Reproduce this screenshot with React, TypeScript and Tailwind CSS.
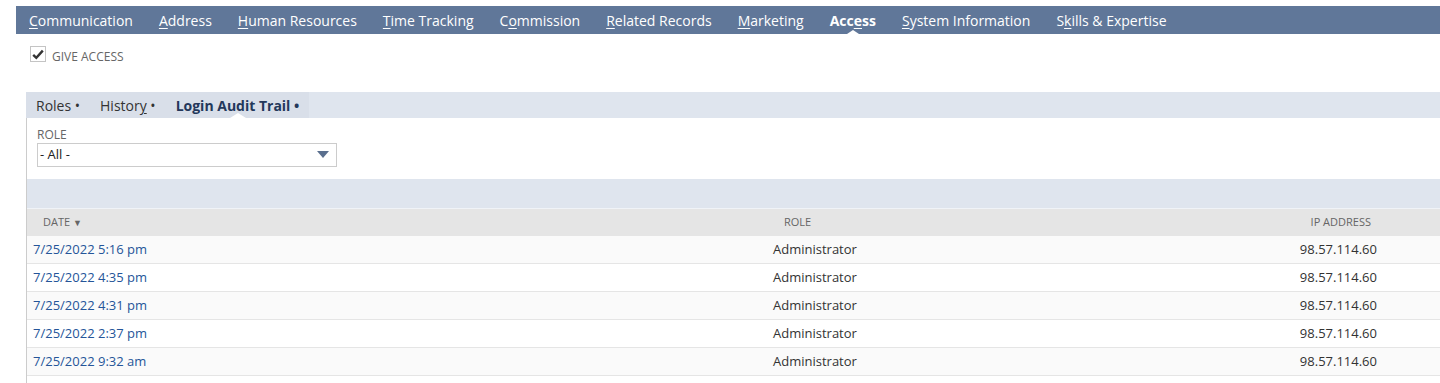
import React from "react";

const font = { fontFamily: '"Open Sans", "Noto Sans", Arial, sans-serif' };

type Tab = { pre: string; key: string; post: string; active?: boolean };
const tabs: Tab[] = [
  { pre: "", key: "C", post: "ommunication" },
  { pre: "", key: "A", post: "ddress" },
  { pre: "", key: "H", post: "uman Resources" },
  { pre: "", key: "T", post: "ime Tracking" },
  { pre: "C", key: "o", post: "mmission" },
  { pre: "", key: "R", post: "elated Records" },
  { pre: "", key: "M", post: "arketing" },
  { pre: "Acc", key: "e", post: "ss", active: true },
  { pre: "", key: "S", post: "ystem Information" },
  { pre: "S", key: "k", post: "ills & Expertise" },
];

const rows = [
  "7/25/2022 5:16 pm",
  "7/25/2022 4:35 pm",
  "7/25/2022 4:31 pm",
  "7/25/2022 2:37 pm",
  "7/25/2022 9:32 am",
];

export default function App() {
  return (
    <div className="w-[1440px] h-[383px] bg-white overflow-hidden" style={font}>
      <div className="pt-[6px] pl-4">
        <div className="h-[28px] bg-[#607799] flex items-center">
          {tabs.map((t, i) => (
            <div
              key={i}
              className={`relative h-full flex items-center px-[13px] text-[14px] text-white ${t.active ? "font-bold" : ""}`}
            >
              <span>
                {t.pre}
                <span className="underline underline-offset-2">{t.key}</span>
                {t.post}
              </span>
              {t.active && (
                <span className="absolute bottom-0 left-1/2 -translate-x-1/2 w-0 h-0 border-l-[6px] border-r-[6px] border-b-[4px] border-l-transparent border-r-transparent border-b-white" />
              )}
            </div>
          ))}
        </div>
      </div>

      <div className="flex items-start pl-[30px] mt-[12px] h-[17px]">
        <div className="w-[16px] h-[16px] border border-[#c4c4c4] bg-white flex items-center justify-center">
          <svg width="12" height="11" viewBox="0 0 12 11">
            <path d="M1.2 5.8 L4.3 8.8 L10.8 1.6" stroke="#333" strokeWidth="2.4" fill="none" strokeLinejoin="miter" />
          </svg>
        </div>
        <span className="ml-[6px] mt-[3px] text-[12px] leading-[16px] text-[#666] uppercase">Give Access</span>
      </div>

      <div className="ml-[26px] mt-[29px]">
        <div className="h-[26px] bg-[#dfe5ee] flex">
          <div className="flex items-center h-full bg-[#d9dfe9] pl-[10px] pr-[10px] text-[14px]">
            <span className="text-[#333] mr-[20px]">Roles •</span>
            <span className="text-[#333] mr-[20px]">
              Histor<span className="underline underline-offset-2">y</span> •
            </span>
            <span className="relative h-full flex items-center font-bold text-[#24385b]">
              Login Audit Trail •
              <span className="absolute bottom-0 left-[54px] w-0 h-0 border-l-[8px] border-r-[8px] border-b-[5px] border-l-transparent border-r-transparent border-b-white" />
            </span>
          </div>
        </div>

        <div className="border-l border-[#cccccc]">
          <div className="pl-[10px] pt-[10px] pb-[12px]">
            <div className="text-[12px] text-[#666] leading-[14px] uppercase">Role</div>
            <div className="mt-[1px] w-[300px] h-[24px] border border-[#cccccc] flex items-center justify-between pl-[2px] pr-[7px]">
              <span className="text-[13px] text-[#222]">- All -</span>
              <svg width="12" height="8" viewBox="0 0 12 8">
                <path d="M0 0 L12 0 L6 7 Z" fill="#5a6f8e" />
              </svg>
            </div>
          </div>

          <div className="h-[30px] bg-[#dfe5ee] border-b border-[#f0f3f7]" />

          <div className="h-[27px] bg-[#e5e5e5] flex items-center text-[11px] text-[#666] uppercase">
            <div className="w-[746px] pl-[16px]">Date <span className="text-[9px]">▼</span></div>
            <div className="flex-1 pl-[11px]">Role</div>
            <div className="w-[200px] text-right pr-[69px]">IP Address</div>
          </div>

          {rows.map((d, i) => (
            <div
              key={i}
              className={`h-[28px] flex items-center text-[13px] border-b border-[#e5e5e5] ${i % 2 === 0 ? "bg-[#fafafa]" : "bg-white"}`}
            >
              <div className="w-[746px] pl-[6px] text-[#255599]">{d}</div>
              <div className="flex-1 text-[#333]">Administrator</div>
              <div className="w-[200px] text-right pr-[63px] text-[#333]">98.57.114.60</div>
            </div>
          ))}
          <div className="h-[10px]" />
        </div>
      </div>
    </div>
  );
}
